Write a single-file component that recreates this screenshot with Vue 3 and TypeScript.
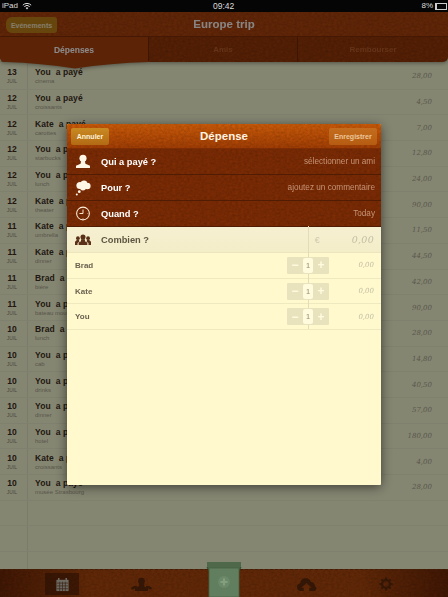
<template>
  <div class="screen">
    <div class="status">
      <span class="status-left">
        iPad
        <svg class="wifi" viewBox="0 0 12 9" width="10" height="8">
          <path d="M1 3.5a7 7 0 0 1 10 0M2.8 5.2a4.5 4.5 0 0 1 6.4 0" fill="none" stroke="#ddd" stroke-width="1.2" />
          <path d="M6 8.6 4.4 6.8a2.3 2.3 0 0 1 3.2 0z" fill="#ddd" />
        </svg>
      </span>
      <span class="status-time">09:42</span>
      <span class="status-right">
        8%
        <span class="battery"><span class="battery-level"></span></span>
      </span>
    </div>

    <header class="topbar">
      <div class="nav leather">
        <button class="back">Evénements</button>
        <h1>Europe trip</h1>
      </div>
      <div class="tabs leather">
        <div
          v-for="(tab, i) in tabs"
          :key="tab"
          class="tab"
          :class="{ active: i === 0 }"
        >{{ tab }}</div>
      </div>
      <svg class="tab-tip" viewBox="0 0 149 8" width="149" height="8" preserveAspectRatio="none">
        <path d="M0 0H149V1Q110 2 75 7.5Q40 2 6 1Q2 1 0 0Z" fill="#a8440e" />
      </svg>
    </header>

    <main class="list">
      <div v-for="(row, i) in expenses" :key="i" class="row">
        <div class="date">
          <strong>{{ row.day }}</strong>
          <small>JUIL</small>
        </div>
        <div class="desc">
          <strong>{{ row.who }}&nbsp; a payé</strong>
          <small>{{ row.what }}</small>
        </div>
        <div class="amount">{{ row.amount }}</div>
      </div>
      <div v-for="n in 3" :key="'empty' + n" class="row"></div>
    </main>

    <footer class="toolbar leather">
      <div class="tool selected">
        <svg viewBox="0 0 16 16" width="15" height="15">
          <path d="M1.5 3h13v12h-13z" fill="#c9c5b5" />
          <path d="M4 1v3M12 1v3" stroke="#c9c5b5" stroke-width="1.6" />
          <path d="M2 6.5h12M2 9.5h12M2 12.5h12M5 5v10M8 5v10M11 5v10" stroke="#6a3a22" stroke-width=".7" />
        </svg>
      </div>
      <div class="tool">
        <svg viewBox="0 0 22 16" width="21" height="15" fill="#5e2a0c">
          <circle cx="11" cy="4.5" r="3.6" />
          <path d="M8.5 7h5l.5 3 4 2v3H4v-3l4-2z" />
          <path d="M3 9.5h3l.5 1.5L2 13H0v-1.5zM19 9.5h-3l-.5 1.5L20 13h2v-1.5z" />
        </svg>
      </div>
      <div class="tool"></div>
      <div class="tool">
        <svg viewBox="0 0 22 16" width="21" height="15" fill="#5e2a0c">
          <path d="M5 15a4.2 4.2 0 0 1-.8-8.3 6 6 0 0 1 11.6-1.5 4.3 4.3 0 0 1 4.2 4.6A2.8 2.8 0 0 1 18 15h-4v-3.5h2.5L11 6.5l-5.5 5H8V15z" />
        </svg>
      </div>
      <div class="tool">
        <svg viewBox="0 0 16 16" width="14" height="14">
          <circle cx="8" cy="8" r="4.5" fill="none" stroke="#5e2a0c" stroke-width="2.6" />
          <path d="M8 .5v3M8 12.5v3M.5 8h3M12.5 8h3M2.7 2.7l2.1 2.1M11.2 11.2l2.1 2.100M13.3 2.700l-2.100 2.100M4.800 11.200l-2.100 2.100" stroke="#5e2a0c" stroke-width="2.200" />
        </svg>
      </div>
    </footer>

    <div class="dim"></div>

    <svg class="money" viewBox="0 0 36 35" width="36" height="35">
      <path d="M1 0H35V5L33 9V35H3V9L1 5Z" fill="#4e6849" />
      <path d="M3 9 1 5M33 9l2-4" stroke="#2f4a2b" stroke-width="1" />
      <rect x="3" y="6" width="30" height="29" fill="#617f5f" stroke="#465f43" stroke-width=".8" />
      <circle cx="18" cy="20" r="6" fill="#6b8968" />
      <path d="M18 16.5v7M14.500 20h7" stroke="#83a07e" stroke-width="2" />
    </svg>

    <section class="modal">
      <div class="modal-head leather">
        <button class="btn cancel">Annuler</button>
        <h2>Dépense</h2>
        <button class="btn save">Enregistrer</button>
      </div>

      <div class="field leather">
        <svg class="field-icon" viewBox="0 0 16 16" width="16" height="15" fill="#fff6e6">
          <circle cx="8" cy="4.5" r="3.8" />
          <path d="M6 7.5h4l.6 2.8 4.9 2.3v2.4H.5v-2.4l4.900-2.300z" />
        </svg>
        <span class="field-label">Qui a payé ?</span>
        <span class="field-value">sélectionner un ami</span>
      </div>
      <div class="field leather">
        <svg class="field-icon" viewBox="0 0 16 16" width="16" height="16" fill="#fff6e6">
          <circle cx="5" cy="5.5" r="3.6" />
          <circle cx="9" cy="3.8" r="3.3" />
          <circle cx="12.3" cy="6" r="3.3" />
          <circle cx="8" cy="7.5" r="3" />
          <circle cx="4.3" cy="11.7" r="1.4" />
          <circle cx="1.8" cy="14.5" r="1" />
        </svg>
        <span class="field-label">Pour ?</span>
        <span class="field-value">ajoutez un commentaire</span>
      </div>
      <div class="field leather">
        <svg class="field-icon" viewBox="0 0 16 16" width="15" height="15" fill="none" stroke="#fff0da">
          <circle cx="8" cy="8" r="6.8" stroke-width="1.1" />
          <path d="M8 3.800V8H4.200" stroke-width="1" />
          <path d="M8 13v.8M12.800 8h.8" stroke-width=".7" />
        </svg>
        <span class="field-label">Quand ?</span>
        <span class="field-value">Today</span>
      </div>

      <div class="total">
        <svg class="field-icon" viewBox="0 0 22 16" width="16" height="12" fill="#5a3018">
          <circle cx="11" cy="4" r="3.5" />
          <path d="M8.5 7h5l.5 3 3 1.500V15H5v-3.500L8 10z" />
          <circle cx="4" cy="5.500" r="2.600" />
          <circle cx="18" cy="5.500" r="2.600" />
          <path d="M2.500 8h3l.5 2.500L3.500 12v3H0v-4.500zM19.500 8h-3l-.5 2.500 2.500 1.500v3H22v-4.500z" />
        </svg>
        <span class="total-label">Combien ?</span>
        <span class="currency">€</span>
        <span class="total-amount">0,00</span>
      </div>

      <div v-for="friend in friends" :key="friend" class="share">
        <span class="share-name">{{ friend }}</span>
        <div class="stepper">
          <span>−</span>
          <b>1</b>
          <span>+</span>
        </div>
        <span class="share-amount">0,00</span>
      </div>
      <div class="divider"></div>
    </section>
  </div>
</template>

<script setup lang="ts">
interface Expense {
  day: number
  who: string
  what: string
  amount: string
}

const tabs = ['Dépenses', 'Amis', 'Rembourser']
const friends = ['Brad', 'Kate', 'You']

const expenses: Expense[] = [
  { day: 13, who: 'You', what: 'cinema', amount: '28,00' },
  { day: 12, who: 'You', what: 'croissants', amount: '4,50' },
  { day: 12, who: 'Kate', what: 'carottes', amount: '7,00' },
  { day: 12, who: 'You', what: 'starbucks', amount: '12,80' },
  { day: 12, who: 'You', what: 'lunch', amount: '24,00' },
  { day: 12, who: 'Kate', what: 'theater', amount: '90,00' },
  { day: 11, who: 'Kate', what: 'umbrella', amount: '11,50' },
  { day: 11, who: 'Kate', what: 'dinner', amount: '44,50' },
  { day: 11, who: 'Brad', what: 'bière', amount: '42,00' },
  { day: 11, who: 'You', what: 'bateau mouche', amount: '90,00' },
  { day: 10, who: 'Brad', what: 'lunch', amount: '28,00' },
  { day: 10, who: 'You', what: 'cab', amount: '14,80' },
  { day: 10, who: 'You', what: 'drinks', amount: '40,50' },
  { day: 10, who: 'You', what: 'dinner', amount: '57,00' },
  { day: 10, who: 'You', what: 'hotel', amount: '180,00' },
  { day: 10, who: 'Kate', what: 'croissants', amount: '4,00' },
  { day: 10, who: 'You', what: 'musée Strasbourg', amount: '28,00' }
]
</script>

<style>
html,
body {
  margin: 0;
  background: #000;
}
</style>

<style scoped>
.screen {
  /* leather grain, shared by every brown bar */
  --grain: url("data:image/svg+xml,%3Csvg xmlns='http://www.w3.org/2000/svg' width='160' height='80'%3E%3Cfilter id='g'%3E%3CfeTurbulence type='fractalNoise' baseFrequency='.35 .5' numOctaves='2' stitchTiles='stitch'/%3E%3CfeColorMatrix values='0 0 0 0 0 0 0 0 0 0 0 0 0 0 0 0 0 0 .28 -.06'/%3E%3C/filter%3E%3Crect width='160' height='80' filter='url(%23g)'/%3E%3C/svg%3E");
  position: relative;
  display: flex;
  flex-direction: column;
  width: 448px;
  height: 597px;
  overflow: hidden;
  font-family: "Liberation Sans", Arial, sans-serif;
  background: #f6f8d2;
  filter: blur(0.35px);
}

.leather {
  background-image: var(--grain);
}

.status {
  position: relative;
  z-index: 3;
  display: flex;
  justify-content: space-between;
  align-items: center;
  height: 12px;
  padding: 0 1px 0 2px;
  background: #050505;
  color: #dcdcdc;
  font-size: 8px;
  line-height: 12px;
}

.status-left {
  display: flex;
  align-items: center;
  gap: 4px;
}

.status-time {
  position: absolute;
  left: 213px;
  font-size: 8.5px;
}

.status-right {
  display: flex;
  align-items: center;
  gap: 2px;
}

.battery {
  display: block;
  width: 10px;
  height: 5px;
  border: 1px solid #ccc;
}

.battery-level {
  display: block;
  width: 1px;
  height: 5px;
  background: #ccc;
}

.topbar {
  position: relative;
  z-index: 1;
  flex: none;
  height: 50px;
  filter: drop-shadow(0 1px 2px rgba(0, 0, 0, 0.4));
}

.nav {
  display: flex;
  align-items: center;
  justify-content: center;
  position: relative;
  height: 25px;
  background-color: #b8480e;
  border-bottom: 1px solid #7e2e06;
  box-sizing: border-box;
}

.nav h1 {
  margin: 0;
  font-size: 11.5px;
  font-weight: bold;
  color: #fff;
  opacity: 0.95;
}

.back {
  position: absolute;
  left: 6px;
  top: 5px;
  width: 51px;
  height: 16px;
  padding: 0;
  border: 0;
  border-radius: 6px 3px 3px 6px;
  background: #bf8218;
  color: #f3e6c8;
  font: bold 7px "Liberation Sans", Arial, sans-serif;
}

.tabs {
  display: grid;
  grid-template-columns: 149px 149px 150px;
  height: 25px;
  background-color: #a03c0a;
  border-radius: 0 0 5px 5px;
}

.tab {
  display: flex;
  align-items: center;
  justify-content: center;
  font-size: 8px;
  font-weight: bold;
  color: #b85f2c;
  border-right: 1px solid #742804;
  box-sizing: border-box;
}

.tab:last-child {
  border-right: 0;
}

.tab.active {
  background-color: #ab420d;
  color: #fff;
  font-size: 8.5px;
  border-radius: 0 0 0 5px;
}

.tab-tip {
  position: absolute;
  left: 0;
  top: 49px;
}

.list {
  flex: 1;
  display: flex;
  flex-direction: column;
  margin-top: -1px;
  padding-top: 3px;
  min-height: 0;
  overflow: hidden;
  background: linear-gradient(90deg, transparent 27px, #e6e4c4 27px, #e6e4c4 28px, transparent 28px);
}

.row {
  display: flex;
  flex: none;
  align-items: center;
  height: 25.7px;
  box-sizing: border-box;
  border-bottom: 1px solid #ebecca;
}

.date {
  display: flex;
  flex-direction: column;
  align-items: center;
  width: 24px;
  color: #3e2c20;
}

.date strong {
  font-size: 8.5px;
  line-height: 11px;
}

.date small {
  font-size: 5px;
  line-height: 7px;
  color: #8b8774;
}

.desc {
  display: flex;
  flex-direction: column;
  margin-left: 11px;
  flex: 1;
  color: #3e2f23;
}

.desc strong {
  font-size: 8.5px;
  line-height: 11px;
  letter-spacing: 0.1px;
}

.desc small {
  font-size: 6px;
  line-height: 7px;
  color: #a3a08a;
}

.amount {
  width: 55px;
  padding-right: 16px;
  box-sizing: border-box;
  text-align: right;
  font: italic 7px "DejaVu Serif", serif;
  color: #a6a48e;
}

.toolbar {
  display: grid;
  grid-template-columns: 34px 124px 42px 122px 38px;
  flex: none;
  height: 28px;
  background-image: var(--grain), linear-gradient(90deg, #7a2c08, #b84c0e 20%, #b84c0e 80%, #7a2c08);
  border-top: 1px dashed #7f360c;
  box-sizing: border-box;
  padding-left: 45px;
}

.tool {
  display: flex;
  align-items: center;
  justify-content: center;
  height: 22px;
  margin-top: 3px;
}

.tool.selected {
  background: rgba(55, 20, 5, 0.5);
}

.dim {
  position: absolute;
  inset: 12px 0 0;
  z-index: 2;
  background: rgba(0, 0, 0, 0.46);
}

.money {
  position: absolute;
  z-index: 2;
  left: 206px;
  top: 562px;
}

.modal {
  position: absolute;
  z-index: 4;
  left: 67px;
  top: 124px;
  width: 314px;
  height: 361px;
  overflow: hidden;
  background: #fff9cd;
  box-shadow: 0 2px 12px rgba(0, 0, 0, 0.55);
  border-radius: 1px;
}

.modal-head {
  display: grid;
  grid-template-columns: 1fr auto 1fr;
  align-items: center;
  height: 24px;
  padding: 0 4px;
  background-image: var(--grain), linear-gradient(#cf5c08, #a53f04);
  border-bottom: 1px solid #7e2c04;
}

.modal-head h2 {
  margin: 0;
  font-size: 11.5px;
  font-weight: bold;
  color: #fff3e0;
}

.btn {
  height: 17px;
  padding: 0;
  border: 0;
  border-radius: 2px;
  font: bold 7px "Liberation Sans", Arial, sans-serif;
}

.cancel {
  width: 38px;
  background: linear-gradient(#c98a22, #b26a14);
  color: #fff3da;
}

.save {
  width: 48px;
  justify-self: end;
  background: linear-gradient(#c46d1e, #b55c12);
  color: #ecc79a;
}

.field {
  display: flex;
  align-items: center;
  height: 26px;
  box-sizing: border-box;
  padding-right: 6px;
  background-color: #7e2c04;
  border-bottom: 1px solid #511c04;
  color: #fff;
}

.field-icon {
  flex: none;
  width: 16px;
  margin-left: 8px;
}

.field-label {
  margin-left: 10px;
  flex: 1;
  font-size: 9.3px;
  font-weight: bold;
}

.field-value {
  font-size: 8.2px;
  color: #c69477;
}

.total {
  display: flex;
  align-items: center;
  height: 26px;
  box-sizing: border-box;
  background: linear-gradient(#f6f0d2, #f3edc8);
  border-bottom: 1px solid #ece5bd;
  padding-right: 7px;
}

.total-label {
  margin-left: 10px;
  flex: 1;
  font-size: 9.3px;
  font-weight: bold;
  color: #5f5442;
}

.currency {
  margin-right: 32px;
  font-size: 9px;
  color: #cfc9ae;
}

.total-amount {
  font: italic 9.5px "DejaVu Serif", serif;
  color: #c3bea5;
  letter-spacing: 0.3px;
}

.share {
  display: flex;
  align-items: center;
  height: 25.7px;
  box-sizing: border-box;
  padding: 0 7px 0 8px;
  border-bottom: 1px solid #efe9bf;
}

.share-name {
  flex: 1;
  font-size: 8px;
  font-weight: bold;
  color: #6b6250;
}

.stepper {
  position: relative;
  z-index: 1;
  display: grid;
  grid-template-columns: 16px 10px 16px;
  align-items: center;
  height: 17px;
  width: 42px;
  background: #e9e3bd;
  border-radius: 1px;
  color: #fffbe0;
  text-align: center;
  font-size: 12px;
  font-weight: bold;
}

.stepper b {
  height: 15px;
  background: #fffbdc;
  border-radius: 2px;
  color: #a8a48a;
  font-size: 6.5px;
  line-height: 15px;
}

.share-amount {
  width: 45px;
  text-align: right;
  font: italic 7px "DejaVu Serif", serif;
  color: #c3bea5;
}

.divider {
  position: absolute;
  left: 241px;
  top: 102px;
  width: 1px;
  height: 103px;
  background: #e2dcb8;
}
</style>
